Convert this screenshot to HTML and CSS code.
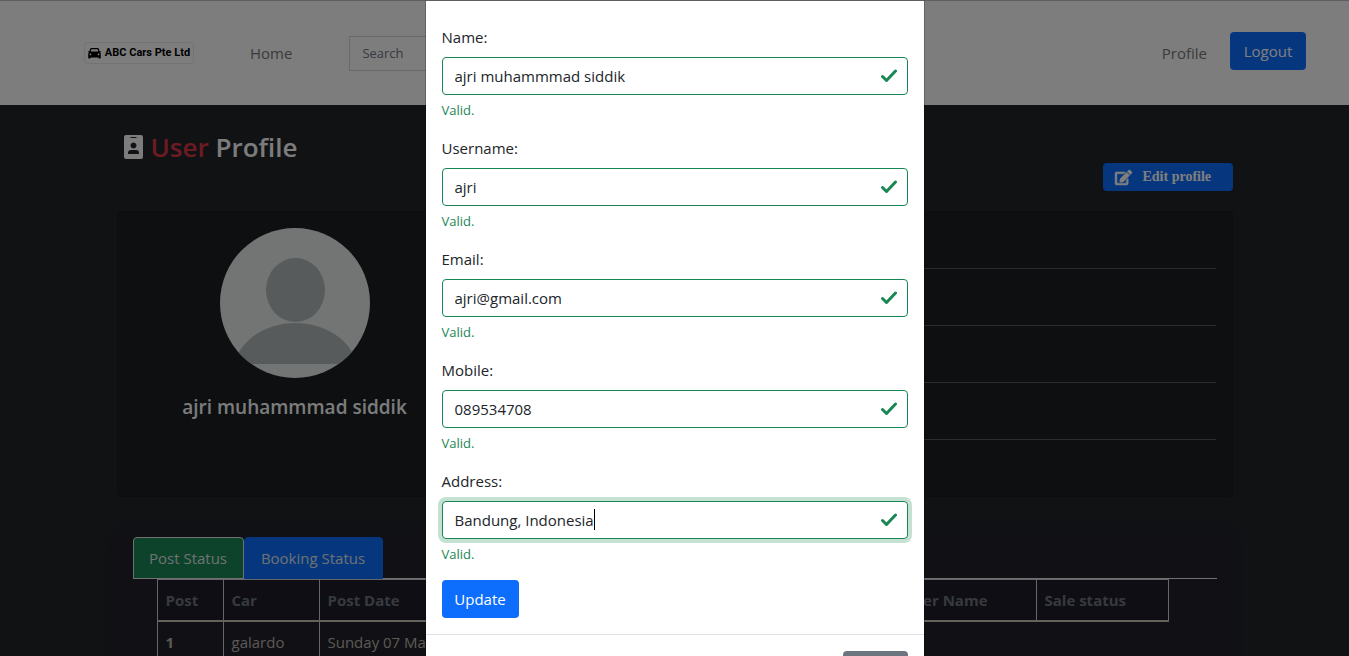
FILE: index.html
```
<!DOCTYPE html>
<html lang="en">
<head>
<meta charset="utf-8">
<meta name="viewport" content="width=device-width, initial-scale=1">
<title>User Profile</title>
<link rel="stylesheet" href="styles.css">
</head>
<body>
<div class="page">
  <header class="navbar">
    <a class="brand" href="#">
      <svg class="brand-icon" viewBox="0 0 16 14" aria-hidden="true"><path fill="#000" fill-rule="evenodd" d="M4 0h8q1.200 0 1.600 1.200L14.500 4H16v1l-.9.500q.9.800.9 2V12.500q0 1-1 1h-1q-1 0-1-1V12H3v.5q0 1-1 1H1q-1 0-1-1V7.500q0-1.200.9-2L0 5V4h1.500l.9-2.800Q2.800 0 4 0zM4 1.500L3.200 4.500h9.600L12 1.500zM2.800 7a1.100 1.100 0 1 0 .01 0zM13.200 7a1.100 1.100 0 1 0 .01 0z"/></svg>
      <span>ABC Cars Pte Ltd</span>
    </a>
    <a class="nav-link nav-home" href="#">Home</a>
    <input class="search" type="search" placeholder="Search" aria-label="Search">
    <nav class="nav-right">
      <a class="nav-link" href="#">Profile</a>
      <button class="btn logout" type="button">Logout</button>
    </nav>
  </header>

  <main class="container">
    <div class="title-row">
      <h1 class="title">
        <svg class="title-icon" viewBox="0 0 19 24" aria-hidden="true"><path fill="currentColor" fill-rule="evenodd" d="M2 0h15q2 0 2 2v20q0 2-2 2H2q-2 0-2-2V2Q0 0 2 0zM6.500 2v1h6V2zM9.500 7.500a3 3 0 1 0 .01 0zM4 19h11v-1q0-3-3-3H7q-3 0-3 3z"/></svg>
        <span><span class="accent">User</span> Profile</span>
      </h1>
      <button class="btn edit-btn" type="button">
        <svg class="edit-icon" viewBox="0 0 576 512" aria-hidden="true"><path fill="currentColor" stroke="currentColor" stroke-width="16" d="M402.600 83.200l90.200 90.200c3.800 3.800 3.800 10 0 13.800L274.400 405.600l-92.800 10.300c-12.400 1.400-22.900-9.100-21.500-21.500l10.300-92.800L388.800 83.200c3.800-3.800 10-3.800 13.800 0zm162-22.900l-48.800-48.800c-15.200-15.200-39.900-15.200-55.200 0l-35.400 35.400c-3.800 3.800-3.800 10 0 13.800l90.200 90.200c3.800 3.800 10 3.800 13.800 0l35.400-35.400c15.200-15.300 15.200-40 0-55.200zM384 346.200V448H64V128h229.800c3.200 0 6.200-1.300 8.500-3.500l40-40c7.600-7.600 2.200-20.500-8.500-20.500H48C21.500 64 0 85.500 0 112v352c0 26.500 21.500 48 48 48h352c26.500 0 48-21.500 48-48V306.200c0-10.700-12.900-16-20.500-8.500l-40 40c-2.200 2.300-3.500 5.300-3.500 8.500z"/></svg>
        <span>Edit profile</span>
      </button>
    </div>

    <section class="card">
      <div class="person">
        <svg class="avatar" viewBox="0 0 150 150" role="img" aria-label="Profile photo"><defs><clipPath id="round"><circle cx="75" cy="75" r="75"/></clipPath></defs><g clip-path="url(#round)"><path fill="#e6e8e8" d="M0 0h150v150H0z"/><ellipse cx="75.500" cy="62" rx="29.500" ry="32" fill="#b0b7b9"/><path fill="#b0b7b9" d="M14 136C20 112 46 95 75.500 95S131 112 137 136z"/></g></svg>
        <h2 class="person-name">ajri muhammmad siddik</h2>
      </div>
      <div class="facts"><hr><hr><hr><hr></div>
    </section>

    <section class="posts">
      <div class="tabs">
        <button class="tab tab-active" type="button">Post Status</button>
        <button class="tab" type="button">Booking Status</button>
      </div>
      <table class="table">
        <colgroup><col class="c-post"><col class="c-car"><col class="c-date"><col class="c-user"><col class="c-sale"></colgroup>
        <thead><tr><th>Post</th><th>Car</th><th>Post Date</th><th class="user-head">User Name</th><th>Sale status</th></tr></thead>
        <tbody><tr><th>1</th><td>galardo</td><td>Sunday 07 May</td></tr></tbody>
      </table>
    </section>
  </main>
</div>

<div class="backdrop">
  <div class="modal" role="dialog" aria-modal="true" aria-label="Edit profile">
    <form class="modal-body">
      <div class="field"><label for="name">Name:</label><div class="control"><input id="name" type="text" value="ajri muhammmad siddik"><svg class="check" viewBox="0 0 16 14" aria-hidden="true"><path d="M1.500 7.500L5.500 11.500L14.500 2"/></svg></div><p class="valid">Valid.</p></div>
      <div class="field"><label for="username">Username:</label><div class="control"><input id="username" type="text" value="ajri"><svg class="check" viewBox="0 0 16 14" aria-hidden="true"><path d="M1.500 7.500L5.500 11.500L14.500 2"/></svg></div><p class="valid">Valid.</p></div>
      <div class="field"><label for="email">Email:</label><div class="control"><input id="email" type="text" value="ajri@gmail.com"><svg class="check" viewBox="0 0 16 14" aria-hidden="true"><path d="M1.500 7.500L5.500 11.500L14.500 2"/></svg></div><p class="valid">Valid.</p></div>
      <div class="field"><label for="mobile">Mobile:</label><div class="control"><input id="mobile" type="text" value="089534708"><svg class="check" viewBox="0 0 16 14" aria-hidden="true"><path d="M1.500 7.500L5.500 11.500L14.500 2"/></svg></div><p class="valid">Valid.</p></div>
      <div class="field"><label for="address">Address:</label><div class="control"><input id="address" class="focused" type="text" value="Bandung, Indonesia"><span class="caret"></span><svg class="check" viewBox="0 0 16 14" aria-hidden="true"><path d="M1.500 7.500L5.500 11.500L14.500 2"/></svg></div><p class="valid">Valid.</p></div>
      <button class="btn update" type="button">Update</button>
    </form>
    <footer class="modal-footer"><button class="btn btn-secondary" type="button" aria-label="Close"></button></footer>
  </div>
</div>
</body>
</html>
```
FILE: styles.css
```
* { box-sizing: border-box; }
html, body { height: 100%; }
body {
  margin: 0;
  overflow: hidden;
  background: #212529;
  color: #212529;
  font: 15px/24px "Open Sans", "Noto Sans", sans-serif;
}
button, input { font: inherit; }
h1, h2, p { margin: 0; }

.navbar {
  display: flex;
  align-items: center;
  height: 105px;
  padding: 0 43px 0 84px;
  border-top: 1px solid #bfbcc6;
  background: #fafafa;
}
.brand {
  display: flex;
  align-items: center;
  justify-content: center;
  gap: 4px;
  width: 110px;
  height: 22px;
  border: 1px solid #e6e6e6;
  border-radius: 4px;
  color: #000;
  font: bold 11px/20px Roboto, sans-serif;
  text-decoration: none;
  white-space: nowrap;
}
.brand-icon { width: 13px; height: 11px; }
.nav-link { color: #777; text-decoration: none; }
.nav-home { margin-left: 56px; }
.search {
  width: 240px;
  height: 35px;
  margin-left: 57px;
  padding: 0 12px;
  border: 1px solid #ced4da;
  background: #fafafa;
  font-size: 13px;
}
.search::placeholder { color: #6c757d; }
.nav-right { display: flex; align-items: center; gap: 23px; margin-left: auto; }
.btn {
  height: 38px;
  padding: 0 12px;
  border: 0;
  border-radius: 4px;
  background: #0d6efd;
  color: #fff;
}
.logout { width: 76px; margin-bottom: 4px; }
.update { width: 77px; font-weight: 500; }

.container { max-width: 1140px; margin: 0 auto; padding: 0 12px; }
.title-row { display: flex; justify-content: space-between; height: 106px; padding: 24px 0 20px 7px; }
.title { display: flex; align-items: center; gap: 8px; height: 36px; color: #f8f9fa; font-size: 26px; line-height: 36px; font-weight: 600; }
.title-icon { width: 19px; height: 24px; }
.accent { color: #dc3545; }
.edit-btn {
  display: flex;
  align-items: center;
  align-self: flex-end;
  gap: 11px;
  width: 130px;
  height: 28px;
  font: bold 14px/20px "Liberation Serif", serif;
}
.edit-icon { width: 17px; height: 15px; overflow: visible; }
.card {
  display: flex;
  height: 286px;
  padding: 16px 16px 0;
  border: 1px solid #191b1e;
  border-radius: 4px;
  background: #1b1e21;
}
.person { flex: 0 0 322px; display: flex; flex-direction: column; align-items: center; gap: 17px; }
.avatar { width: 150px; height: 150px; }
.person-name { color: #f8f9fa; font-size: 19px; line-height: 24px; font-weight: 600; }
.facts { flex: 1; padding-top: 40px; }
.facts hr { height: 1px; margin: 0 0 56px; border: 0; background: #56585a; }

.posts { margin: 40px 16px 0; background: #23222a; box-shadow: 0 12px 16px 20px #23222a; }
.tabs { display: flex; border-bottom: 1px solid #dee2e6; }
.tab {
  width: 139px;
  height: 42px;
  margin-bottom: -1px;
  padding: 0;
  border: 1px solid #0d6efd;
  border-radius: 4px 4px 0 0;
  background: #0d6efd;
  color: #dee2e6;
}
.tab-active { width: 111px; border-color: #dee2e6; background: #198754; }
.table {
  width: 1012px;
  margin-left: 24px;
  border-collapse: collapse;
  table-layout: fixed;
  color: #b8b3ae;
}
.c-post { width: 66px; }
.c-car { width: 96px; }
.c-date { width: 180px; }
.c-sale { width: 132px; }
.table th, .table td { height: 42px; padding: 0 8px; border: 1px solid #cfcfd2; text-align: left; white-space: nowrap; }
.table thead th { height: 41px; border-bottom: 2px solid #ccc3b8; background: #1e1c28; color: #6c757d; }
.table .user-head { padding-right: 48px; text-align: right; }

.backdrop {
  position: fixed;
  inset: 0;
  overflow: hidden;
  background: rgba(0, 0, 0, .5);
}
.modal {
  width: 500px;
  max-width: 100%;
  margin: 0 auto;
  border: 1px solid rgba(0, 0, 0, .2);
  border-top: 1px solid #5f5d63;
  border-bottom: 0;
  background: #fff;
  background-clip: padding-box;
}
.modal-body { padding: 24px 16px 16px; }
.field { margin-bottom: 15px; }
.field label { display: block; height: 24px; margin-bottom: 8px; }
.control { position: relative; }
.control input {
  display: block;
  width: 100%;
  height: 38px;
  padding: 0 36px 0 12px;
  border: 1px solid #198754;
  border-radius: 4px;
  background: #fff;
  color: #212529;
  outline: 0;
}
.control .focused { box-shadow: 0 0 0 4px rgba(25, 135, 84, .25); }
.caret { position: absolute; left: 152px; top: 8px; width: 1px; height: 21px; background: #000; }
.check { position: absolute; right: 11px; top: 12px; width: 16px; height: 14px; }
.check path { fill: none; stroke: #198754; stroke-width: 3; stroke-linecap: round; stroke-linejoin: round; }
.valid { margin-top: 4px; color: #198754; font-size: 13px; line-height: 22px; }
.modal-footer { display: flex; justify-content: flex-end; padding: 16px; border-top: 1px solid #dee2e6; }
.btn-secondary { width: 65px; background: #6c757d; }
```
